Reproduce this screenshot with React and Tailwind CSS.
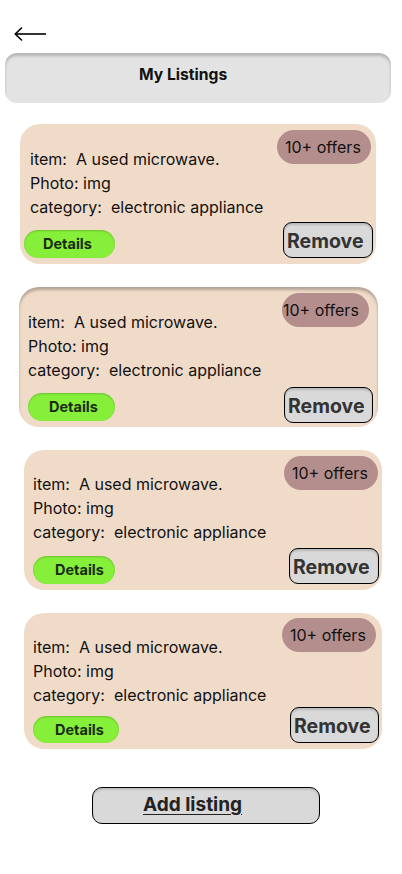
import React from "react";

const cards = [
  {
    card: "ml-[20px] w-[356px] h-[140px] mt-[21px]",
    left: "pl-[4px] pt-[23px] pb-[6px]",
    textPl: "pl-[6px]",
    details: "w-[91px] h-[28px] pl-[19px]",
    pill: "mt-[6px] mr-[5px] w-[94px] h-[34px] pl-[8px]",
    remove: "mr-[3px] mb-[6px] w-[90px] h-[36px]",
    extra: "",
  },
  {
    card: "ml-[19px] w-[359px] h-[140px] mt-[23px]",
    left: "pl-[9px] pt-[23px] pb-[6px]",
    textPl: "pl-0",
    details: "w-[87px] h-[28px] pl-[21px]",
    pill: "mt-[6px] mr-[9px] w-[87px] h-[34px] pl-[1px]",
    remove: "mr-[5px] mb-[4px] w-[89px] h-[36px]",
    extra: "shadow-[inset_0_3px_3px_rgba(0,0,0,0.25)]",
  },
  {
    card: "ml-[24px] w-[358px] h-[140px] mt-[23px]",
    left: "pl-[9px] pt-[22px] pb-[6px]",
    textPl: "pl-0",
    details: "w-[82px] h-[28px] pl-[22px]",
    pill: "mt-[6px] mr-[4px] w-[94px] h-[34px] pl-[8px]",
    remove: "mr-[3px] mb-[6px] w-[90px] h-[36px]",
    extra: "",
  },
  {
    card: "ml-[24px] w-[358px] h-[136px] mt-[23px]",
    left: "pl-[9px] pt-[22px] pb-[6px]",
    textPl: "pl-0",
    details: "w-[86px] h-[27px] pl-[22px]",
    pill: "mt-[5px] mr-[6px] w-[94px] h-[34px] pl-[8px]",
    remove: "mr-[3px] mb-[6px] w-[89px] h-[36px]",
    extra: "",
  },
];

function Card({ c }) {
  return (
    <div
      className={`${c.card} ${c.extra} flex flex-row justify-between rounded-[20px] bg-[#f0dbc9]`}
    >
      <div className={`${c.left} flex flex-col`}>
        <div className={`${c.textPl} text-[16px] leading-[24px] text-[#111] whitespace-pre`}>
          <div>item:  A used microwave.</div>
          <div>Photo: img</div>
          <div>category:  electronic appliance</div>
        </div>
        <div
          className={`${c.details} mt-auto flex items-center rounded-full bg-[#86ef3a] text-[14.5px] font-bold text-[#1b2a12] shadow-[inset_0_1px_2px_rgba(0,0,0,0.2)]`}
        >
          Details
        </div>
      </div>
      <div className="flex flex-col items-end justify-between">
        <div
          className={`${c.pill} flex items-center rounded-full bg-[#b48e8c] text-[16px] leading-none text-[#111] whitespace-nowrap`}
        >
          10+ offers
        </div>
        <div
          className={`${c.remove} flex items-center pl-[3px] pt-[3px] rounded-[9px] border border-black bg-[#d9d9d9] text-[19.5px] font-bold text-[#333] shadow-[inset_0_2px_2px_rgba(0,0,0,0.15)] whitespace-nowrap`}
        >
          Remove
        </div>
      </div>
    </div>
  );
}

export default function App() {
  return (
    <div
      className="w-[402px] min-h-[874px] bg-white flex flex-col"
      style={{ fontFamily: "Inter, 'Noto Sans', sans-serif" }}
    >
      <div className="pt-[27px] pl-[14px]">
        <svg width="33" height="14" viewBox="0 0 33 14" fill="none">
          <path d="M1 7 H32" stroke="#000" strokeWidth="1.6" />
          <path d="M7.5 1 L1.2 7 L7.5 13" stroke="#000" strokeWidth="1.6" strokeLinecap="round" strokeLinejoin="round" />
        </svg>
      </div>
      <div className="mt-[12px] ml-[5px] w-[386px] h-[50px] rounded-[12px] bg-[#e3e3e3] shadow-[inset_0_3px_3px_rgba(0,0,0,0.2)] pt-[12px] pl-[134px]">
        <div className="text-[15.7px] leading-[20px] font-bold text-[#111]">My Listings</div>
      </div>
      {cards.map((c, i) => (
        <Card key={i} c={c} />
      ))}
      <div className="mt-[38px] ml-[92px] w-[228px] h-[37px] rounded-[10px] border border-black bg-[#d9d9d9] flex items-center pl-[50px] shadow-[inset_0_2px_2px_rgba(0,0,0,0.12)]">
        <span className="text-[19px] font-bold text-[#222] underline underline-offset-[3px]">Add listing</span>
      </div>
    </div>
  );
}
